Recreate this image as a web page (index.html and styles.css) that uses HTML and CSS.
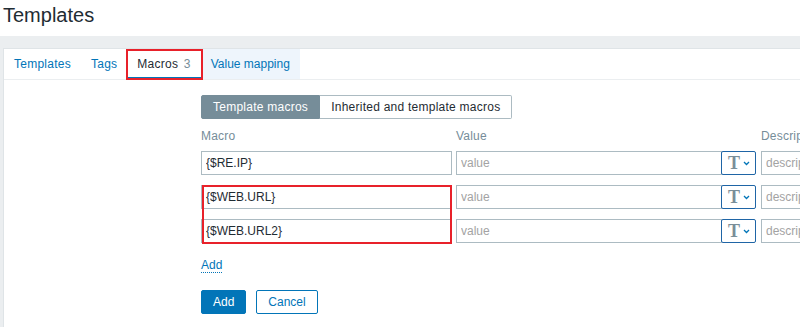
FILE: index.html
```html
<!DOCTYPE html>
<html lang="en">
<head>
  <meta charset="UTF-8">
  <title>Templates</title>
  <link rel="stylesheet" href="styles.css">
</head>
<body>
  <header class="header">
    <h1>Templates</h1>
  </header>
  <div class="wrapper">
    <div class="panel">
      <ul class="tabs">
        <li class="tab"><a href="#">Templates</a></li>
        <li class="tab"><a href="#">Tags</a></li>
        <li class="tab active marked-tab"><span>Macros</span> <span class="count">3</span></li>
        <li class="tab hover"><a href="#">Value mapping</a></li>
      </ul>
      <div class="content">
        <div class="segmented">
          <span class="seg active">Template macros</span>
          <span class="seg">Inherited and template macros</span>
        </div>
        <div class="macro-list">
          <div class="macro-row head">
            <div class="col-macro">Macro</div>
            <div class="col-value">Value</div>
            <div class="col-desc">Description</div>
          </div>
          <div class="macro-row">
            <div class="col-macro"><input class="input" type="text" value="{$RE.IP}"></div>
            <div class="col-value">
              <input class="input" type="text" placeholder="value">
              <button class="type-btn"><span class="t">T</span><svg width="7" height="5" viewBox="0 0 7 5"><polyline points="1,1 3.5,3.5 6,1" fill="none" stroke="#0275b8" stroke-width="1.3"/></svg></button>
            </div>
            <div class="col-desc"><input class="input" type="text" placeholder="description"></div>
          </div>
          <div class="marked">
            <div class="macro-row">
              <div class="col-macro"><input class="input" type="text" value="{$WEB.URL}"></div>
              <div class="col-value">
                <input class="input" type="text" placeholder="value">
                <button class="type-btn"><span class="t">T</span><svg width="7" height="5" viewBox="0 0 7 5"><polyline points="1,1 3.5,3.5 6,1" fill="none" stroke="#0275b8" stroke-width="1.3"/></svg></button>
              </div>
              <div class="col-desc"><input class="input" type="text" placeholder="description"></div>
            </div>
            <div class="macro-row">
              <div class="col-macro"><input class="input" type="text" value="{$WEB.URL2}"></div>
              <div class="col-value">
                <input class="input" type="text" placeholder="value">
                <button class="type-btn"><span class="t">T</span><svg width="7" height="5" viewBox="0 0 7 5"><polyline points="1,1 3.5,3.5 6,1" fill="none" stroke="#0275b8" stroke-width="1.3"/></svg></button>
              </div>
              <div class="col-desc"><input class="input" type="text" placeholder="description"></div>
            </div>
          </div>
        </div>
        <div class="add-row"><a class="link-dotted" href="#">Add</a></div>
        <div class="buttons">
          <button class="btn primary">Add</button>
          <button class="btn alt">Cancel</button>
        </div>
      </div>
    </div>
  </div>
</body>
</html>
```

FILE: styles.css
```css
html, body {
  margin: 0;
  padding: 0;
  overflow: hidden;
}
body {
  font-family: "Liberation Sans", Arial, sans-serif;
  font-size: 12px;
  color: #1f2c33;
  background-color: #fff;
}

.header {
  height: 36px;
  padding: 3px 0 0 3px;
  box-sizing: border-box;
}
.header h1 {
  margin: 0;
  font-size: 20px;
  font-weight: normal;
  line-height: 25px;
  color: #1f2c33;
}

.wrapper {
  background-color: #ebeef0;
  padding: 12px 0 0 3px;
  width: 1000px;
}
.panel {
  background-color: #fff;
  border-top: 1px solid #dfe4e7;
  border-left: 1px solid #dfe4e7;
  height: 300px;
}

.tabs {
  list-style: none;
  margin: 0;
  padding: 0;
  display: flex;
  height: 30px;
  border-bottom: 1px solid #ebeef0;
}
.tab {
  padding: 0 10px;
  line-height: 30px;
  box-sizing: border-box;
  letter-spacing: 0.25px;
}
.tab a {
  color: #0275b8;
  text-decoration: none;
}
.tab.hover {
  background-color: #eef5fc;
  letter-spacing: 0;
}
.tab.active {
  color: #1f2c33;
  box-shadow: inset 0 -2px 0 #0275b8;
}
.tab .count {
  color: #768d99;
  margin-left: 2px;
}
.marked-tab {
  position: relative;
}
.marked-tab::after {
  content: "";
  position: absolute;
  left: -1px;
  right: -2px;
  top: 0;
  bottom: -1px;
  border: 2px solid #e8212a;
}

.content {
  padding: 15px 0 0 197px;
}

.segmented {
  display: flex;
  height: 24px;
}
.seg {
  line-height: 22px;
  padding: 0 11px;
  border: 1px solid #acbbc2;
  background-color: #fff;
  color: #1f2c33;
  letter-spacing: 0.25px;
}
.seg.active {
  background-color: #768d99;
  border-color: #768d99;
  color: #fff;
  border-radius: 2px 0 0 2px;
}
.seg:last-child {
  border-left: 0;
  border-radius: 0 2px 2px 0;
}

.macro-list {
  margin-top: 8px;
  display: flex;
  flex-direction: column;
  gap: 10px;
}
.marked {
  position: relative;
  display: flex;
  flex-direction: column;
  gap: 10px;
}
.marked::after {
  content: "";
  position: absolute;
  left: 1px;
  top: 0;
  width: 250px;
  bottom: -1px;
  border: 2px solid #e8212a;
  box-sizing: border-box;
}

.macro-row {
  display: flex;
  height: 24px;
}
.macro-row.head {
  height: 18px;
  line-height: 18px;
  color: #768d99;
  margin-bottom: -4px;
  white-space: nowrap;
  letter-spacing: 0.2px;
}
.col-macro {
  width: 255px;
  flex: none;
}
.col-value {
  width: 305px;
  flex: none;
  display: flex;
}
.col-desc {
  width: 200px;
  flex: none;
}

.input {
  box-sizing: border-box;
  height: 24px;
  margin: 0;
  padding: 0 4px;
  border: 1px solid #acbbc2;
  font-family: "Liberation Sans", Arial, sans-serif;
  font-size: 12px;
  color: #1f2c33;
  background-color: #fff;
  outline: none;
}
.input::placeholder {
  color: #a3a3a3;
}
.col-macro .input {
  width: 251px;
}
.col-value .input {
  width: 266px;
}
.col-desc .input {
  width: 200px;
}

.type-btn {
  box-sizing: border-box;
  width: 35px;
  height: 24px;
  margin: 0 0 0 -1px;
  padding: 0 0 0 6px;
  border: 1px solid #1f65a6;
  border-radius: 2px;
  background-color: #fff;
  display: flex;
  align-items: center;
  gap: 3px;
}
.type-btn .t {
  font-family: "Liberation Serif", "Times New Roman", serif;
  font-weight: bold;
  font-size: 18px;
  color: #7a8e99;
  line-height: 1;
}

.add-row {
  margin-top: 14px;
  line-height: 16px;
}
.link-dotted {
  color: #0275b8;
  text-decoration: none;
  border-bottom: 1px dotted #0275b8;
}

.buttons {
  margin-top: 17px;
  display: flex;
  gap: 10px;
}
.btn {
  height: 24px;
  padding: 0 11px;
  border-radius: 2px;
  font-family: "Liberation Sans", Arial, sans-serif;
  font-size: 12px;
  border: 1px solid #0275b8;
}
.btn.primary {
  background-color: #0275b8;
  color: #fff;
}
.btn.alt {
  background-color: #fff;
  color: #0275b8;
}
```
